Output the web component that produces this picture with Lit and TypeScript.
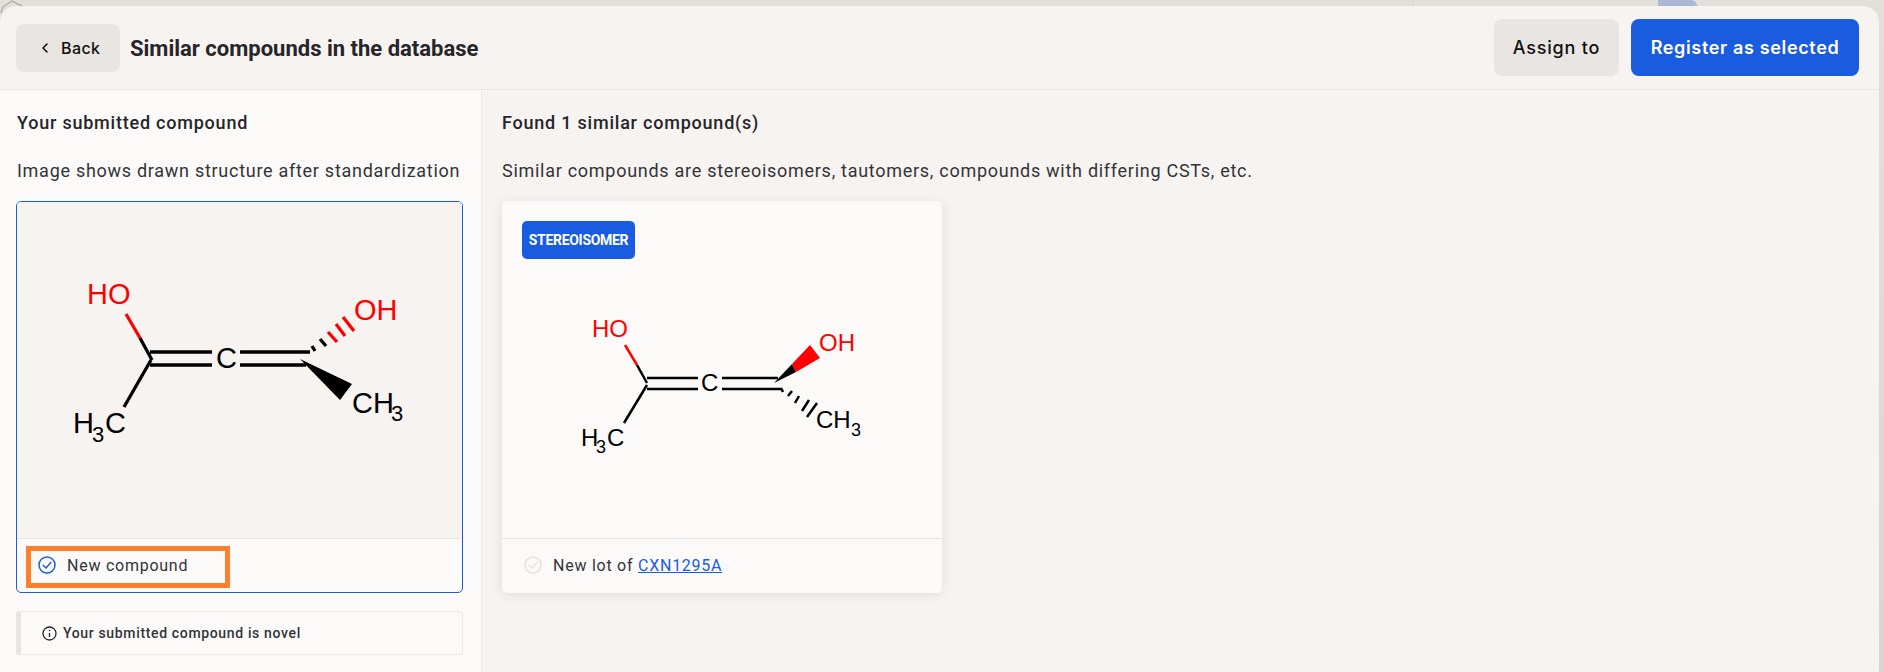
import { LitElement, html, css, svg } from 'lit';
import { customElement } from 'lit/decorators.js';

const RED = '#ff0000';

const firstMolecule = svg`
  <g stroke-width="3.3" stroke="#000" fill="none">
    <line x1="126" y1="314" x2="140" y2="338" stroke="${RED}"></line>
    <line x1="140" y1="338" x2="152" y2="360"></line>
    <line x1="151" y1="360" x2="124" y2="407"></line>
    <line x1="150" y1="352" x2="212" y2="352"></line>
    <line x1="150" y1="365" x2="212" y2="365"></line>
    <line x1="240" y1="352" x2="310" y2="352"></line>
    <line x1="240" y1="365" x2="306" y2="365"></line>
    <line x1="312" y1="346" x2="315" y2="351"></line>
    <line x1="320" y1="339" x2="326" y2="346"></line>
    <line x1="328" y1="332" x2="337" y2="342" stroke="${RED}"></line>
    <line x1="336" y1="324" x2="345" y2="336" stroke="${RED}"></line>
    <line x1="343" y1="317" x2="354" y2="331" stroke="${RED}"></line>
  </g>
  <polygon points="300,359 352,384 340,400" fill="#000"></polygon>
  <g class="atoms big">
    <text x="87" y="304" fill="${RED}">HO</text>
    <text x="216" y="368">C</text>
    <text x="354" y="320" fill="${RED}">OH</text>
    <text x="73" y="433">H</text>
    <text x="105" y="433">C</text>
    <text x="352" y="413">CH</text>
  </g>
  <g class="atoms big-sub">
    <text x="92" y="442">3</text>
    <text x="391" y="421">3</text>
  </g>
`;

const secondMolecule = svg`
  <g stroke-width="2.5" stroke="#000" fill="none">
    <line x1="625" y1="345" x2="637" y2="365" stroke="${RED}"></line>
    <line x1="637" y1="365" x2="647" y2="383"></line>
    <line x1="647" y1="385" x2="624" y2="423"></line>
    <line x1="647" y1="378" x2="698" y2="378"></line>
    <line x1="647" y1="389" x2="698" y2="389"></line>
    <line x1="722" y1="378" x2="778" y2="378"></line>
    <line x1="722" y1="389" x2="781" y2="389"></line>
    <line x1="781" y1="388" x2="783" y2="392"></line>
    <line x1="788" y1="396" x2="792" y2="391"></line>
    <line x1="795" y1="403" x2="799" y2="396"></line>
    <line x1="802" y1="411" x2="809" y2="400"></line>
    <line x1="807" y1="417" x2="817" y2="403"></line>
  </g>
  <polygon points="774,383 792,364 796,372" fill="#000"></polygon>
  <polygon points="792,364 810,345 820,358 796,372" fill="${RED}"></polygon>
  <g class="atoms small">
    <text x="592" y="337" fill="${RED}">HO</text>
    <text x="701" y="391">C</text>
    <text x="819" y="351" fill="${RED}">OH</text>
    <text x="581" y="446">H</text>
    <text x="607" y="446">C</text>
    <text x="816" y="428">CH</text>
  </g>
  <g class="atoms small-sub">
    <text x="596" y="453">3</text>
    <text x="851" y="436">3</text>
  </g>
`;

@customElement('app-root')
export class AppRoot extends LitElement {
  static styles = css`
    :host {
      display: block;
      height: 672px;
      overflow: hidden;
      background: linear-gradient(#e3e0db, #d8d5d1);
      font-family: Roboto, sans-serif;
      color: #25252a;
    }

    .backdrop {
      position: relative;
      height: 6px;
    }
    .backdrop .tab {
      position: absolute;
      left: 1658px;
      top: 0;
      width: 39px;
      height: 6px;
      background: #aab8d6;
      border-radius: 0 12px 0 0;
    }
    .backdrop .seam {
      position: absolute;
      left: 1412px;
      top: 0;
      width: 1px;
      height: 6px;
      background: #d8d5d0;
    }
    .backdrop .corner {
      position: absolute;
      left: 0;
      top: 0;
    }

    .panel {
      height: 666px;
      margin-right: 5px;
      border-radius: 16px 16px 0 0;
      background: #f6f3f0;
      display: flex;
      flex-direction: column;
      overflow: hidden;
    }

    header {
      height: 84px;
      box-sizing: border-box;
      flex: none;
      display: flex;
      align-items: center;
      padding: 0 20px 0 16px;
      border-bottom: 1px solid #e8e5e2;
    }
    header h1 {
      margin: 1px 0 0 10px;
      font-size: 22px;
      font-weight: 700;
      color: #25252a;
      flex: 1;
    }

    button {
      font-family: Inter, sans-serif;
      font-weight: 500;
      border: none;
      border-radius: 8px;
      display: flex;
      align-items: center;
      justify-content: center;
    }
    .back {
      width: 104px;
      height: 48px;
      background: #e8e5e2;
      color: #111;
      font-size: 16px;
      letter-spacing: 0.4px;
      justify-content: flex-start;
      padding: 0 0 0 25px;
      gap: 12px;
    }
    .assign {
      width: 125px;
      height: 57px;
      background: #e8e5e2;
      color: #111;
      font-size: 18px;
      letter-spacing: 0.8px;
      margin-right: 12px;
    }
    .register {
      width: 228px;
      height: 57px;
      background: #1a5ce0;
      color: #fff;
      font-size: 18px;
      font-weight: 600;
      letter-spacing: 0.65px;
    }

    main {
      flex: 1;
      display: flex;
      min-height: 0;
    }
    .left {
      width: 482px;
      box-sizing: border-box;
      flex: none;
      background: #fbfaf8;
      border-right: 1px solid #ece9e6;
      padding: 0 18px 0 17px;
    }
    .left .card,
    .left .note {
      margin-left: -1px;
    }
    .right {
      flex: 1;
      padding: 0 20px;
    }

    h2 {
      margin: 0;
      padding-top: 21px;
      font-size: 18px;
      line-height: 24px;
      font-weight: 500;
      letter-spacing: 0.78px;
      color: #25252a;
    }
    .sub {
      margin: 24px 0 18px;
      font-size: 18px;
      line-height: 24px;
      letter-spacing: 0.72px;
      color: #333338;
      white-space: nowrap;
    }

    .card {
      width: 100%;
      height: 392px;
      box-sizing: border-box;
      display: flex;
      flex-direction: column;
      background: #fbfaf8;
      border-radius: 5px;
    }
    .card.selected {
      border: 1px solid #1a5ce0;
      width: 447px;
    }
    .card.other {
      position: relative;
      width: 440px;
      box-shadow: 0 2px 12px rgba(60, 50, 40, 0.1);
    }

    .image {
      flex: 1;
      min-height: 0;
    }
    .image.shaded {
      background: #f6f3f0;
      border-radius: 4px 4px 0 0;
    }
    .image svg {
      display: block;
      width: 100%;
      height: 100%;
    }

    .atoms {
      font-family: 'Liberation Sans', sans-serif;
    }
    .big { font-size: 29px; }
    .big-sub { font-size: 22px; }
    .small { font-size: 24px; }
    .small-sub { font-size: 18px; }

    .foot {
      box-sizing: border-box;
      flex: none;
      border-top: 1px solid #e8e5e2;
      display: flex;
      align-items: center;
      font-size: 16px;
      letter-spacing: 0.75px;
      color: #333338;
    }
    .selected .foot {
      height: 54px;
      align-items: flex-start;
      padding: 7px 0 0 9px;
    }
    .other .foot {
      height: 55px;
      padding: 0 0 2px 22px;
      gap: 11px;
    }
    .highlight {
      width: 204px;
      height: 42px;
      box-sizing: border-box;
      border: 5px solid #fe7f2d;
      display: flex;
      align-items: center;
      gap: 11px;
      padding: 0 0 4px 7px;
    }
    .foot a {
      color: #1a5ce0;
      text-decoration: underline;
    }

    .badge {
      position: absolute;
      left: 20px;
      top: 20px;
      width: 113px;
      height: 38px;
      border-radius: 5px;
      background: #1a5ce0;
      color: #fff;
      font-size: 14px;
      font-weight: 700;
      letter-spacing: -0.3px;
      display: flex;
      align-items: center;
      justify-content: center;
    }

    .note {
      margin-top: 18px;
      width: 447px;
      height: 44px;
      box-sizing: border-box;
      border: 1px solid #ece9e6;
      border-left: 5px solid #e8e5e2;
      border-radius: 3px;
      display: flex;
      align-items: center;
      gap: 6px;
      padding-left: 21px;
      font-size: 14px;
      font-weight: 500;
      letter-spacing: 0.65px;
      color: #333338;
    }
  `;

  private check(color: string) {
    return html`<svg width="18" height="18" viewBox="0 0 18 18" fill="none" stroke=${color} stroke-width="1.5">
      <circle cx="9" cy="9" r="8"></circle>
      <path d="M5.2 9.2 8 12l4.8-5.6" stroke-linecap="round" stroke-linejoin="round"></path>
    </svg>`;
  }

  render() {
    return html`
      <div class="backdrop">
        <svg class="corner" width="24" height="14" viewBox="0 0 24 14" fill="none" stroke="#b5b2ad" stroke-width="1.5">
          <path d="M1 13 3 7l9-6 10 5"></path>
        </svg>
        <div class="seam"></div>
        <div class="tab"></div>
      </div>
      <div class="panel">
        <header>
          <button class="back">
            <svg width="8" height="12" viewBox="0 0 8 12" fill="none" stroke="#111" stroke-width="1.6">
              <path d="M6 2 2 6l4 4" stroke-linecap="round" stroke-linejoin="round"></path>
            </svg>
            Back
          </button>
          <h1>Similar compounds in the database</h1>
          <button class="assign">Assign to</button>
          <button class="register">Register as selected</button>
        </header>
        <main>
          <section class="left">
            <h2>Your submitted compound</h2>
            <p class="sub">Image shows drawn structure after standardization</p>
            <div class="card selected">
              <div class="image shaded">
                <svg viewBox="17 202 445 336">${firstMolecule}</svg>
              </div>
              <div class="foot">
                <div class="highlight">${this.check('#1a5ce0')} New compound</div>
              </div>
            </div>
            <div class="note">
              <svg width="15" height="15" viewBox="0 0 15 15" fill="none" stroke="#25252a" stroke-width="1.3">
                <circle cx="7.5" cy="7.5" r="6.5"></circle>
                <path d="M7.5 7v4M7.5 4v1.2"></path>
              </svg>
              Your submitted compound is novel
            </div>
          </section>
          <section class="right">
            <h2>Found 1 similar compound(s)</h2>
            <p class="sub">Similar compounds are stereoisomers, tautomers, compounds with differing CSTs, etc.</p>
            <div class="card other">
              <div class="badge">STEREOISOMER</div>
              <div class="image">
                <svg viewBox="502 201 440 337">${secondMolecule}</svg>
              </div>
              <div class="foot">
                ${this.check('#e4e2df')}
                <span>New lot of <a href="#">CXN1295A</a></span>
              </div>
            </div>
          </section>
        </main>
      </div>
    `;
  }
}
